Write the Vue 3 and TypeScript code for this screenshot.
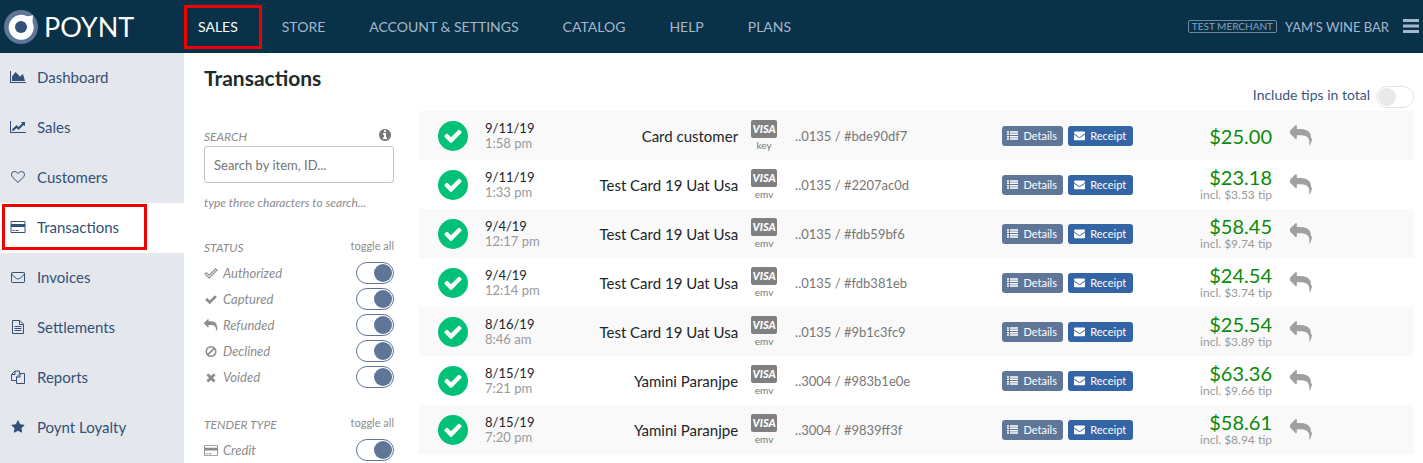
<script setup lang="ts">
import { ref } from 'vue'

interface Icon {
  box: string
  fill?: string
  line?: string
  weight?: number
}

const replyPath =
  'M1792 1120q0 166-127 451-3 7-10.500 24t-13.500 30-13 22q-12 17-28 17-15 0-23.500-10t-8.500-25q0-9 2.500-26.500t2.500-23.500q5-68 5-123 0-112-19.500-200.500t-54-153.500-89-112-117.500-78-147-45.500-172-24-199-6.500h-224v256q0 26-19 45t-45 19-45-19l-512-512q-19-19-19-45t19-45l512-512q19-19 45-19t45 19 19 45v256h224q713 0 875 403 53 134 53 333z'
const checkPath =
  'M1671 566q0 40-28 68l-724 724-136 136q-28 28-68 28t-68-28l-136-136-362-362q-28-28-28-68t28-68l136-136q28-28 68-28t68 28l294 295 656-657q28-28 68-28t68 28l136 136q28 28 28 68z'

const icons: Record<string, Icon> = {
  area: {
    box: '0 0 2048 1792',
    fill: 'M2048 1536v128h-2048v-1536h128v1408h1920zm-384-1024l256 896h-1664v-576l448-576 576 576z',
  },
  trend: {
    box: '0 0 2048 1792',
    fill: 'M2048 1536v128h-2048v-1536h128v1408h1920zm-128-1248v435q0 21-19.500 29.500t-35.500-7.500l-121-121-633 633q-10 10-23 10t-23-10l-233-233-416 416-192-192 585-585q10-10 23-10t23 10l233 233 464-464-121-121q-16-16-7.500-35.500t29.500-19.500h435q14 0 23 9t9 23z',
  },
  heart: {
    box: '0 0 1792 1792',
    line: 'M896 1600L273 1000Q64 790 64 580Q64 192 460 192Q660 192 896 440Q1132 192 1332 192Q1728 192 1728 580Q1728 790 1519 1000Z',
    weight: 128,
  },
  card: {
    box: '0 0 1920 1792',
    fill: 'M1760 128q66 0 113 47t47 113v1216q0 66-47 113t-113 47h-1600q-66 0-113-47t-47-113v-1216q0-66 47-113t113-47h1600zm-1600 128q-13 0-22.500 9.500t-9.500 22.500v224h1664v-224q0-13-9.500-22.500t-22.500-9.500h-1600zm1600 1280q13 0 22.500-9.500t9.500-22.500v-608h-1664v608q0 13 9.500 22.500t22.500 9.500h1600zm-1504-128v-128h256v128h-256zm384 0v-128h384v128h-384z',
  },
  mail: {
    box: '0 0 1792 1792',
    line: 'M160 320H1632Q1728 320 1728 416V1504Q1728 1600 1632 1600H160Q64 1600 64 1504V416Q64 320 160 320ZM80 400Q90 610 300 770L700 1090Q896 1230 1092 1090L1492 770Q1702 610 1712 400',
    weight: 128,
  },
  file: {
    box: '0 0 1792 1792',
    line: 'M192 64H1120L1600 544V1728H192ZM1088 64V576H1600M448 832H1344M448 1088H1344M448 1344H1344',
    weight: 128,
  },
  files: {
    box: '0 0 1792 1792',
    line: 'M640 1344H64V576L512 128H1088V480M512 128V576H64M1152 448H1728V1728H704V896ZM1152 448V896H704',
    weight: 128,
  },
  star: {
    box: '0 0 1792 1792',
    fill: 'M1728 647q0 22-26 48l-363 354 86 500q1 7 1 20 0 21-10.500 35.500t-30.500 14.500q-19 0-40-12l-449-236-449 236q-22 12-40 12-21 0-31.500-14.500t-10.500-35.500q0-6 2-20l86-500-364-354q-25-27-25-48 0-37 56-46l502-73 225-455q19-41 49-41t49 41l225 455 502 73q56 9 56 46z',
  },
  checkOutline: {
    box: '0 0 1792 1792',
    line: 'M64 980L250 790L620 1130L1540 250L1728 440L620 1510Z',
    weight: 150,
  },
  check: { box: '0 0 1792 1792', fill: checkPath },
  reply: { box: '0 0 1792 1792', fill: replyPath },
  ban: {
    box: '0 0 1792 1792',
    line: 'M896 236A660 660 0 1 0 896 1556A660 660 0 1 0 896 236ZM430 1362L1362 430',
    weight: 210,
  },
  cross: {
    box: '0 0 1792 1792',
    fill: 'M1490 1322q0 40-28 68l-136 136q-28 28-68 28t-68-28l-294-294-294 294q-28 28-68 28t-68-28l-136-136q-28-28-28-68t28-68l294-294-294-294q-28-28-28-68t28-68l136-136q28-28 68-28t68 28l294 294 294-294q28-28 68-28t68 28l136 136q28 28 28 68t-28 68l-294 294 294 294q28 28 28 68z',
  },
}

const menu = ['SALES', 'STORE', 'ACCOUNT & SETTINGS', 'CATALOG', 'HELP', 'PLANS']

const sections = [
  { label: 'Dashboard', icon: 'area' },
  { label: 'Sales', icon: 'trend' },
  { label: 'Customers', icon: 'heart' },
  { label: 'Transactions', icon: 'card' },
  { label: 'Invoices', icon: 'mail' },
  { label: 'Settlements', icon: 'file' },
  { label: 'Reports', icon: 'files' },
  { label: 'Poynt Loyalty', icon: 'star' },
]

const filters = ref([
  {
    title: 'STATUS',
    options: [
      { label: 'Authorized', icon: 'checkOutline', on: true },
      { label: 'Captured', icon: 'check', on: true },
      { label: 'Refunded', icon: 'reply', on: true },
      { label: 'Declined', icon: 'ban', on: true },
      { label: 'Voided', icon: 'cross', on: true },
    ],
  },
  { title: 'TENDER TYPE', options: [{ label: 'Credit', icon: 'card', on: true }] },
])

function toggleAll(group: { options: { on: boolean }[] }) {
  const next = !group.options.every((o) => o.on)
  group.options.forEach((o) => (o.on = next))
}

const search = ref('')
const includeTips = ref(false)

const rows = [
  { date: '9/11/19', time: '1:58 pm', name: 'Card customer', entry: 'key', code: '..0135 / #bde90df7', total: '$25.00', tip: '' },
  { date: '9/11/19', time: '1:33 pm', name: 'Test Card 19 Uat Usa', entry: 'emv', code: '..0135 / #2207ac0d', total: '$23.18', tip: 'incl. $3.53 tip' },
  { date: '9/4/19', time: '12:17 pm', name: 'Test Card 19 Uat Usa', entry: 'emv', code: '..0135 / #fdb59bf6', total: '$58.45', tip: 'incl. $9.74 tip' },
  { date: '9/4/19', time: '12:14 pm', name: 'Test Card 19 Uat Usa', entry: 'emv', code: '..0135 / #fdb381eb', total: '$24.54', tip: 'incl. $3.74 tip' },
  { date: '8/16/19', time: '8:46 am', name: 'Test Card 19 Uat Usa', entry: 'emv', code: '..0135 / #9b1c3fc9', total: '$25.54', tip: 'incl. $3.89 tip' },
  { date: '8/15/19', time: '7:21 pm', name: 'Yamini Paranjpe', entry: 'emv', code: '..3004 / #983b1e0e', total: '$63.36', tip: 'incl. $9.66 tip' },
  { date: '8/15/19', time: '7:20 pm', name: 'Yamini Paranjpe', entry: 'emv', code: '..3004 / #9839ff3f', total: '$58.61', tip: 'incl. $8.94 tip' },
]
</script>

<template>
  <div class="app">
    <header class="topbar">
      <a class="brand" href="#">
        <svg class="mark" viewBox="0 0 34 34" aria-hidden="true">
          <circle cx="17" cy="17" r="17" fill="#5f7698" />
          <path
            d="M29 5L28.500 12A12.500 12.500 0 1 1 22.500 6Q26 6.500 29 5Z"
            fill="#fff"
          />
          <circle cx="17" cy="17" r="6" fill="#34507a" />
        </svg>
        <span class="wordmark">POYNT</span>
      </a>
      <nav class="menu" aria-label="Main">
        <a v-for="(item, i) in menu" :key="item" href="#" :class="{ current: i === 0 }">{{ item }}</a>
      </nav>
      <div class="account">
        <span class="tag">TEST MERCHANT</span>
        <span class="merchant">YAM'S WINE BAR</span>
        <button class="burger" type="button" aria-label="Menu">
          <svg viewBox="0 0 16 14"><path d="M0 1.500H16M0 7H16M0 12.500H16" stroke="currentColor" stroke-width="3" /></svg>
        </button>
      </div>
    </header>

    <div class="body">
      <nav class="side" aria-label="Sections">
        <a v-for="s in sections" :key="s.label" href="#" :class="{ active: s.label === 'Transactions' }">
          <svg class="icon" :viewBox="icons[s.icon].box" aria-hidden="true">
            <path v-if="icons[s.icon].fill" :d="icons[s.icon].fill" fill="currentColor" />
            <path v-else :d="icons[s.icon].line" fill="none" stroke="currentColor" :stroke-width="icons[s.icon].weight" />
          </svg>
          <span>{{ s.label }}</span>
        </a>
      </nav>

      <aside class="filters">
        <h1>Transactions</h1>
        <div class="heading search-heading">
          <label for="search">SEARCH</label>
          <svg class="info" viewBox="0 0 1792 1792" aria-hidden="true">
            <path
              fill="currentColor"
              d="M1152 1376v-160q0-14-9-23t-23-9h-96v-512q0-14-9-23t-23-9h-320q-14 0-23 9t-9 23v160q0 14 9 23t23 9h96v320h-96q-14 0-23 9t-9 23v160q0 14 9 23t23 9h448q14 0 23-9t9-23zm-128-896v-160q0-14-9-23t-23-9h-192q-14 0-23 9t-9 23v160q0 14 9 23t23 9h192q14 0 23-9t9-23zm640 416q0 209-103 385.500t-279.500 279.500-385.500 103-385.500-103-279.500-279.500-103-385.500 103-385.500 279.500-279.500 385.500-103 385.500 103 279.500 279.500 103 385.500z"
            />
          </svg>
        </div>
        <input id="search" v-model="search" class="search" type="text" placeholder="Search by item, ID..." />
        <p class="hint">type three characters to search...</p>

        <section v-for="group in filters" :key="group.title" class="group">
          <div class="heading">
            <h2>{{ group.title }}</h2>
            <button type="button" class="all" @click="toggleAll(group)">toggle all</button>
          </div>
          <div v-for="o in group.options" :key="o.label" class="option">
            <svg class="icon" :viewBox="icons[o.icon].box" aria-hidden="true">
              <path v-if="icons[o.icon].fill" :d="icons[o.icon].fill" fill="currentColor" />
              <path v-else :d="icons[o.icon].line" fill="none" stroke="currentColor" :stroke-width="icons[o.icon].weight" />
            </svg>
            <label :for="'f-' + o.label">{{ o.label }}</label>
            <input :id="'f-' + o.label" v-model="o.on" class="switch" type="checkbox" />
          </div>
        </section>
      </aside>

      <main class="main">
        <div class="tips">
          <label for="tips">Include tips in total</label>
          <input id="tips" v-model="includeTips" class="switch" type="checkbox" />
        </div>
        <table>
          <colgroup>
            <col class="c-state" />
            <col class="c-date" />
            <col class="c-name" />
            <col class="c-card" />
            <col />
            <col class="c-actions" />
            <col class="c-total" />
            <col class="c-refund" />
          </colgroup>
          <tbody>
            <tr v-for="r in rows" :key="r.code">
              <td class="state">
                <span class="ok">
                  <svg viewBox="0 0 1792 1792" aria-hidden="true"><path :d="icons.check.fill" fill="#fff" /></svg>
                </span>
              </td>
              <td class="when"><span>{{ r.date }}</span><small>{{ r.time }}</small></td>
              <td class="name">{{ r.name }}</td>
              <td class="tender"><span class="visa">VISA</span><small>{{ r.entry }}</small></td>
              <td class="code">{{ r.code }}</td>
              <td>
                <div class="actions">
                  <button type="button" class="details">
                    <svg viewBox="0 0 11 9" aria-hidden="true">
                      <path d="M0 1H2M3 1H11M0 3.300H2M3 3.300H11M0 5.700H2M3 5.700H11M0 8H2M3 8H11" stroke="currentColor" stroke-width="1.400" />
                    </svg>
                    Details
                  </button>
                  <button type="button" class="receipt">
                    <svg viewBox="0 0 1792 1792" aria-hidden="true">
                      <path
                        fill="currentColor"
                        d="M1792 710v794q0 66-47 113t-113 47h-1472q-66 0-113-47t-47-113v-794q44 49 101 87 362 246 497 345 57 42 92.500 65.500t94.500 48 110 24.500h2q51 0 110-24.500t94.500-48 92.500-65.500q170-123 498-345 57-39 100-87zm0-294q0 79-49 151t-122 123q-376 261-468 325-10 7-42.500 31t-54 38-52 32.500-57.500 27-50 9h-2q-23 0-50-9t-57.500-27-52-32.500-54-38-42.500-31q-91-64-262-182.500t-205-142.500q-62-42-117-115.500t-55-136.500q0-78 41.500-130t118.500-52h1472q65 0 112.500 47t47.500 113z"
                      />
                    </svg>
                    Receipt
                  </button>
                </div>
              </td>
              <td class="total"><span>{{ r.total }}</span><small v-if="r.tip">{{ r.tip }}</small></td>
              <td class="refund">
                <button type="button" aria-label="Refund">
                  <svg viewBox="0 0 1792 1792"><path :d="icons.reply.fill" fill="currentColor" /></svg>
                </button>
              </td>
            </tr>
          </tbody>
        </table>
      </main>
    </div>
  </div>
</template>

<style>
body {
  margin: 0;
  background: #fff;
}
html {
  overflow: hidden;
}
</style>

<style scoped>
.app {
  font-family: Lato, 'Liberation Sans', sans-serif;
  color: #212529;
  font-size: 14px;
  line-height: 20px;
  height: 100vh;
  display: flex;
  flex-direction: column;
  overflow: hidden;
}
*,
*::before,
*::after {
  box-sizing: border-box;
}
a {
  text-decoration: none;
  color: inherit;
}
button {
  font: inherit;
  color: inherit;
  border: 0;
  background: none;
  padding: 0;
  cursor: pointer;
}
svg {
  display: block;
}
small {
  display: block;
}

.topbar {
  display: flex;
  flex: none;
  align-items: center;
  height: 53px;
  background: #093147;
  color: #a4b8cc;
}
.brand {
  display: flex;
  align-items: center;
  gap: 6px;
  width: 184px;
  padding-left: 4px;
  color: #fff;
}
.mark {
  width: 34px;
  height: 34px;
}
.wordmark {
  font-size: 27px;
  line-height: 34px;
}
.menu {
  display: flex;
  gap: 44px;
  padding-left: 14px;
}
.menu a {
  white-space: nowrap;
}
.menu .current {
  position: relative;
  color: #fff;
}
.menu .current::after {
  content: '';
  position: absolute;
  inset: -12px -24px -12px -14px;
  border: 3px solid #f00000;
}
.account {
  display: flex;
  align-items: center;
  gap: 8px;
  margin-left: auto;
  padding-right: 4px;
}
.tag {
  font-size: 10px;
  line-height: 11px;
  padding: 0 3px;
  border: 1px solid #6f87a6;
  border-radius: 2px;
  color: #8ba1bb;
}
.merchant {
  font-size: 13px;
}
.burger {
  margin: 0 0 2px 6px;
}
.burger svg {
  width: 16px;
  height: 14px;
}

.body {
  display: flex;
  flex: 1;
  min-height: 0;
}
.side {
  flex: none;
  width: 184px;
  background: #e4e8ed;
  color: #325078;
}
.side a {
  display: flex;
  align-items: center;
  gap: 11px;
  height: 50px;
  padding: 0 0 2px 10px;
  font-size: 15px;
}
.side .icon {
  width: 16px;
  height: 14px;
}
.side .active {
  position: relative;
  background: #fff;
}
.side .active::after {
  content: '';
  position: absolute;
  inset: 1px 37px 3px 2px;
  border: 3px solid #f00000;
}

.filters {
  flex: none;
  width: 190px;
  margin-left: 20px;
  color: #8c8c8c;
}
h1 {
  margin: 13px 0 36px;
  font-size: 21px;
  line-height: 24px;
  font-weight: 700;
  color: #212b2b;
}
.heading {
  display: flex;
  align-items: center;
  justify-content: space-between;
  height: 20px;
  font-size: 12px;
  font-style: italic;
}
.search-heading label {
  padding-top: 2px;
}
.info {
  width: 14px;
  height: 14px;
  margin: 0 2px 2px 0;
  color: #777;
}
.search {
  display: block;
  width: 100%;
  height: 37px;
  padding: 0 9px;
  border: 1px solid #c4c4c4;
  border-radius: 3px;
  font: inherit;
  font-size: 13px;
  color: #333;
}
.search::placeholder {
  color: #757575;
  opacity: 1;
}
.hint {
  margin: 10px 0 23px;
  font-size: 12px;
  font-style: italic;
}
h2 {
  margin: 0;
  font: inherit;
}
.all {
  padding-bottom: 4px;
  font-style: normal;
  font-size: 11px;
}
.group {
  margin-bottom: 23px;
}
.group .heading {
  height: 24px;
}
.option {
  display: flex;
  align-items: center;
  gap: 5px;
  height: 26px;
  font-size: 13px;
  font-style: italic;
}
.option .icon {
  width: 14px;
  height: 13px;
}
.switch {
  appearance: none;
  flex: none;
  width: 38px;
  height: 22px;
  margin: 0 0 0 auto;
  padding: 1px;
  border: 1px solid #e4e4e4;
  border-radius: 11px;
  background: #fff;
}
.switch::before {
  content: '';
  display: block;
  width: 18px;
  height: 18px;
  border-radius: 50%;
  background: #e9e9e9;
}
.switch:checked {
  border-color: #5f7698;
}
.switch:checked::before {
  margin-left: auto;
  background: #5f7698;
}

.main {
  flex: 1;
  min-width: 0;
  padding: 33px 9px 0 25px;
}
.tips {
  display: flex;
  justify-content: flex-end;
  gap: 6px;
  height: 25px;
  color: #3b557c;
  line-height: 18px;
}
.tips .switch {
  margin: 0;
}
table {
  width: 100%;
  table-layout: fixed;
  border-collapse: collapse;
}
.c-state {
  width: 66px;
}
.c-date {
  width: 74px;
}
.c-name {
  width: 18%;
}
.c-card {
  width: 52px;
}
.c-actions {
  width: 131px;
}
.c-total {
  width: 14%;
}
.c-refund {
  width: 142px;
}
tr {
  height: 49px;
}
tr:nth-child(odd) {
  background: #f9f9f9;
}
td {
  padding: 0;
  white-space: nowrap;
}
.ok {
  display: flex;
  align-items: center;
  justify-content: center;
  width: 30px;
  height: 30px;
  margin-left: 19px;
  border-radius: 50%;
  background: #00c176;
}
.ok svg {
  width: 20px;
  height: 20px;
}
.when {
  font-size: 13px;
  line-height: 15px;
}
.when small {
  font-size: 13px;
  color: #999;
}
.name {
  text-align: right;
  font-size: 15px;
}
.tender {
  text-align: center;
}
.visa {
  display: block;
  width: 26px;
  height: 18px;
  margin: 0 auto;
  border-radius: 2px;
  background: #808080;
  color: #fff;
  font-size: 11px;
  line-height: 18px;
  font-weight: 900;
  font-style: italic;
}
.tender small {
  font-size: 10px;
  line-height: 14px;
  color: #777;
}
.code {
  padding-left: 5px;
  font-size: 13px;
  color: #777;
}
.actions {
  display: flex;
  gap: 5px;
}
.actions button {
  display: flex;
  align-items: center;
  justify-content: center;
  gap: 5px;
  width: 61px;
  height: 20px;
  border-radius: 3px;
  font-size: 11px;
  color: #fff;
}
.actions svg {
  width: 11px;
  height: 11px;
}
.actions .details {
  background: #5f7698;
}
.actions .receipt {
  width: 65px;
  background: #3364a5;
}
.total {
  text-align: right;
}
.total span {
  display: block;
  font-size: 20px;
  line-height: 20px;
  color: #0a8a0a;
}
.total small {
  font-size: 12px;
  line-height: 16px;
  color: #999;
}
.refund {
  padding-left: 18px;
}
.refund button {
  display: block;
  color: #a0a0a0;
}
.refund svg {
  width: 22px;
  height: 22px;
}
</style>
